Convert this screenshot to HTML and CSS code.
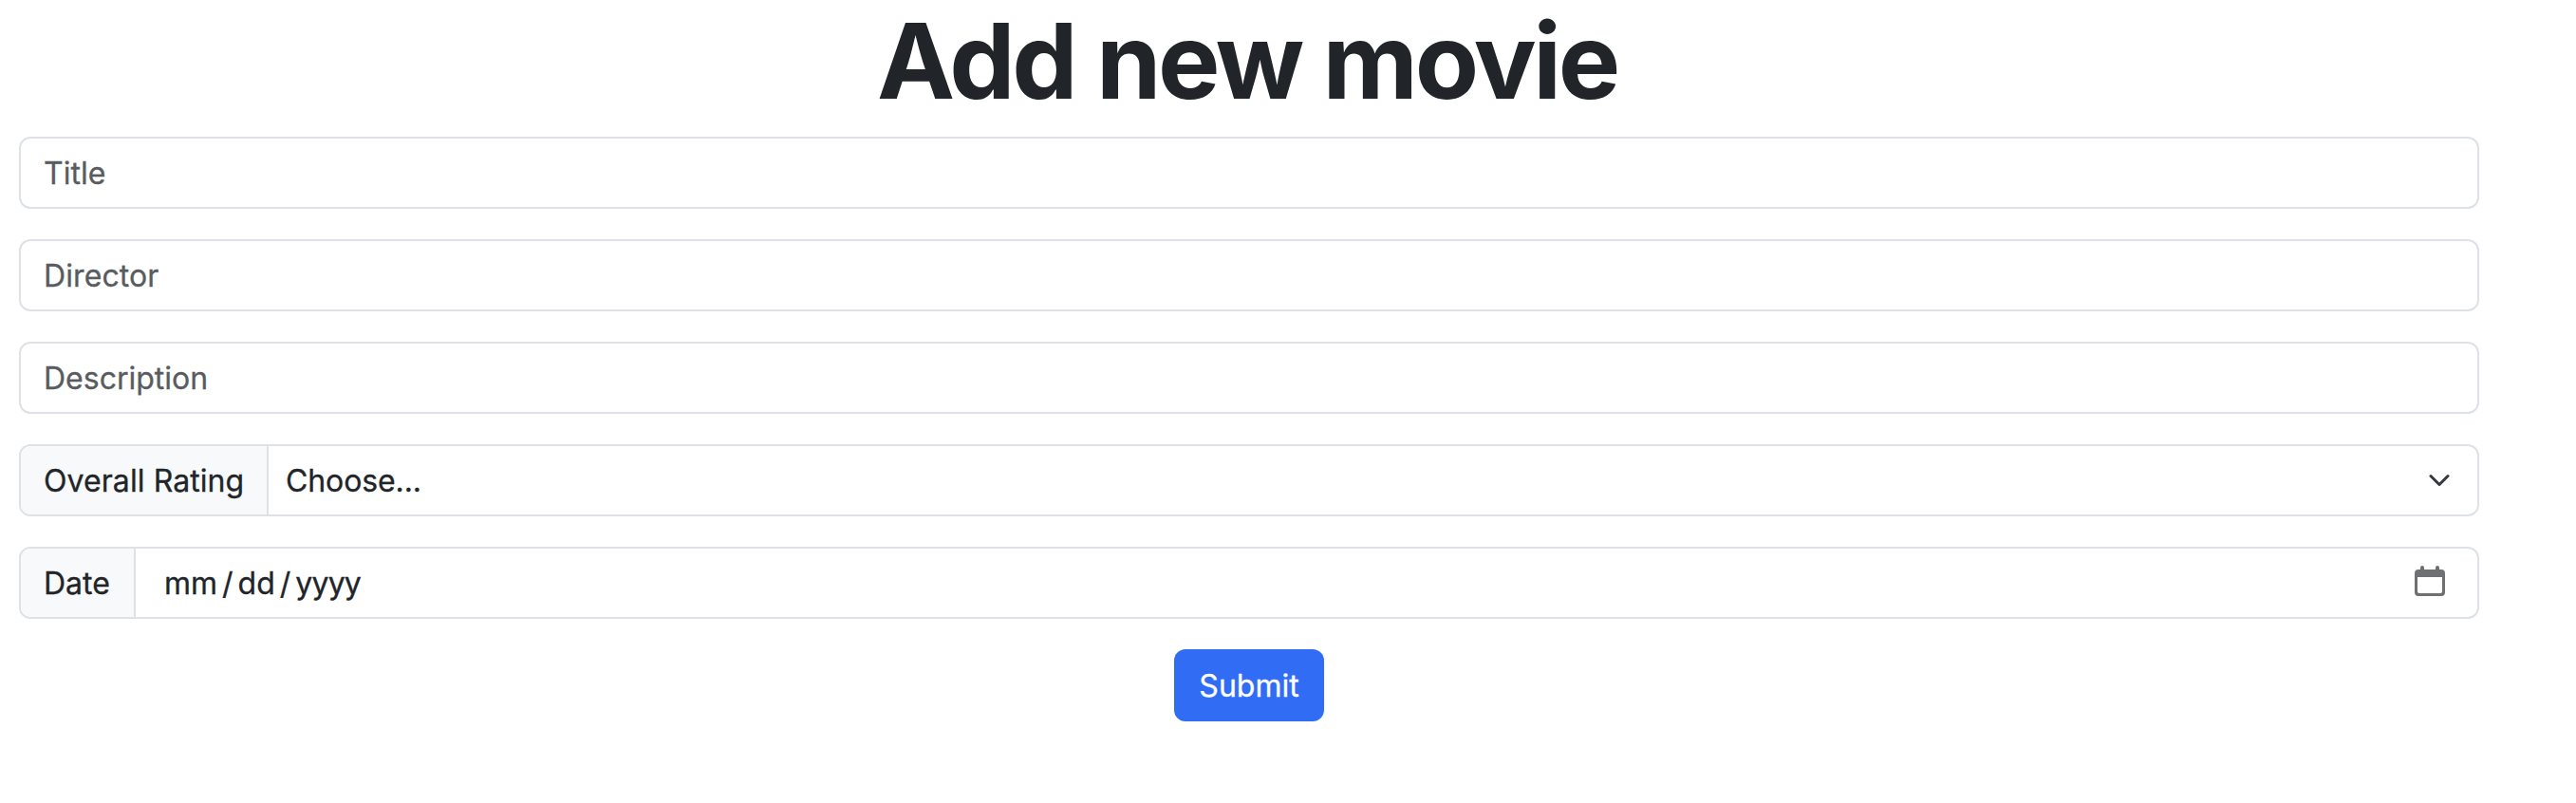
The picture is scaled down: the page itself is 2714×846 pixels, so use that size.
FILE: index.html
```
<!DOCTYPE html>
<html lang="en">
<head>
<meta charset="utf-8">
<title>Add new movie</title>
<link rel="stylesheet" href="styles.css">
</head>
<body>
<main class="page">
  <h1 class="heading">Add new movie</h1>
  <form class="form">
    <div class="field"><span class="control placeholder">Title</span></div>
    <div class="field"><span class="control placeholder director">Director</span></div>
    <div class="field"><span class="control placeholder">Description</span></div>
    <div class="field">
      <span class="addon addon-rating">Overall Rating</span>
      <span class="control select"><span class="choice">Choose...</span>
        <svg class="chevron" viewBox="0 0 16 16"><path d="m2 5 6 6 6-6" fill="none" stroke="#343a40" stroke-width="2" stroke-linecap="round" stroke-linejoin="round"/></svg>
      </span>
    </div>
    <div class="field">
      <span class="addon addon-date">Date</span>
      <span class="control date">
        <span class="parts"><span class="mm">mm</span><span class="slash">/</span><span class="dd">dd</span><span class="slash">/</span><span class="yyyy">yyyy</span></span>
        <svg class="calendar" viewBox="0 0 32 32" fill="#6f7071"><path fill-rule="evenodd" d="M6 4V2a2 2 0 0 1 4 0V4H22V2a2 2 0 0 1 4 0V4H28a4 4 0 0 1 4 4V28a4 4 0 0 1-4 4H4a4 4 0 0 1-4-4V8a4 4 0 0 1 4-4ZM3 12V27a2 2 0 0 0 2 2H27a2 2 0 0 0 2-2V12Z"/></svg>
      </span>
    </div>
    <button class="submit" type="button">Submit</button>
  </form>
</main>
</body>
</html>
```
FILE: styles.css
```
* { box-sizing: border-box; }
body {
  margin: 0;
  background: #fff;
  color: #212529;
  font-family: Inter, "Liberation Sans", sans-serif;
  font-size: 32px;
  font-weight: 400;
  line-height: 48px;
}
.page { width: 2632px; padding: 0 20px; }
.heading {
  margin: 0;
  height: 144px;
  padding-right: 4px;
  font-size: 110px;
  line-height: 128px;
  font-weight: 700;
  text-align: center;
  white-space: nowrap;
  letter-spacing: -3.35px;
}
.form { display: flex; flex-direction: column; gap: 32px; -webkit-text-stroke: 0.3px; }
.field {
  display: flex;
  height: 76px;
  border: 2px solid #dee2e6;
  border-radius: 12px;
  overflow: hidden;
  white-space: nowrap;
}
.control { display: flex; flex: 1; align-items: center; padding: 2px 0 0 24px; }
.placeholder { color: #595c5f; }
.director { letter-spacing: 0.1px; }
.addon {
  display: flex;
  align-items: center;
  padding: 2px 0 0 24px;
  background: #f8f9fa;
  border-right: 2px solid #dee2e6;
}
.addon-rating { width: 261px; letter-spacing: 0.08px; }
.addon-date { width: 121px; }
.select { justify-content: space-between; padding: 2px 28px 0 18px; }
.date { justify-content: space-between; padding: 2px 34px 0 30px; }
.choice { letter-spacing: -0.1px; }
.chevron { width: 24px; height: 24px; margin-bottom: 2px; }
.calendar { width: 32px; height: 32px; margin-bottom: 6px; }
.parts { display: flex; }
.slash { padding: 0 5px; }
.yyyy { letter-spacing: -0.8px; }
.submit {
  align-self: center;
  width: 158px;
  height: 76px;
  padding: 2px 0 0;
  border: 0;
  border-radius: 12px;
  background: #316df4;
  color: #fff;
  font: inherit;
}
```
